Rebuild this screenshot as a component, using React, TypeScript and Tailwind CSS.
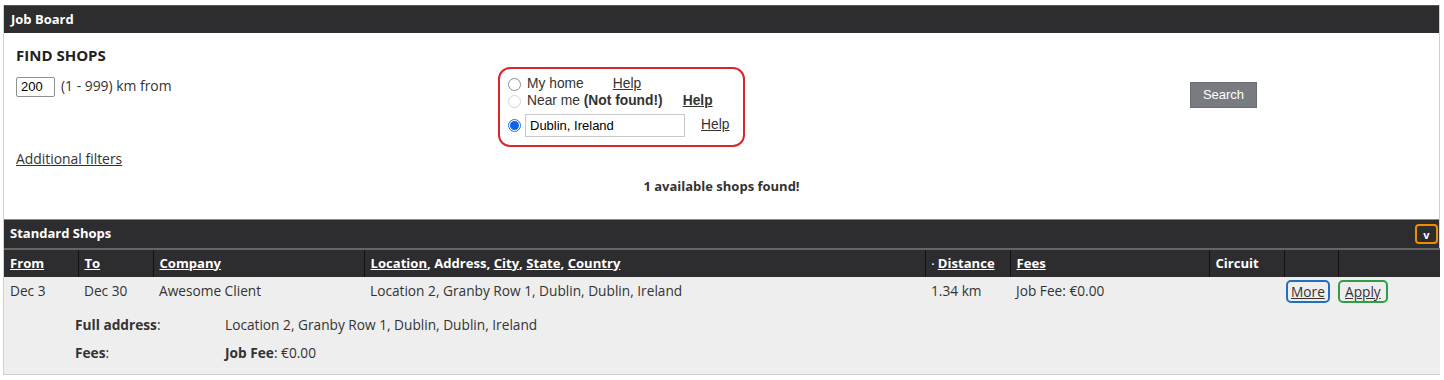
import React from "react";

const F = { fontFamily: '"Open Sans", "DejaVu Sans", sans-serif' };
const A = { fontFamily: '"Liberation Sans", Arial, sans-serif' };

function Radio({ checked, faded }: { checked?: boolean; faded?: boolean }) {
  return (
    <span
      className={
        "inline-block w-[13px] h-[13px] rounded-full border shrink-0 " +
        (checked
          ? "border-[#1a73e8] bg-white flex items-center justify-center"
          : faded
          ? "border-[#d4d4d4] bg-white"
          : "border-[#8d8d8d] bg-white")
      }
    >
      {checked && <span className="block w-[9px] h-[9px] rounded-full bg-[#0b63e6] mt-[1px] ml-[1px]" />}
    </span>
  );
}

export default function App() {
  const cols = [
    { w: 74, label: "From", u: true },
    { w: 75, label: "To", u: true },
    { w: 211, label: "Company", u: true },
    { w: 561, label: "loc" },
    { w: 85, label: "dist" },
    { w: 199, label: "Fees", u: true },
    { w: 75, label: "Circuit" },
    { w: 54, label: "" },
    { w: 102, label: "" },
  ];
  return (
    <div className="w-[1444px] h-[380px] bg-white pt-[5px] pl-[3px] text-[#333]" style={F}>
      <div className="w-[1437px] border-l border-r border-b border-[#cfcfcf]">
        <div className="h-[28px] bg-[#2d2d2f] border-t border-[#555] text-white font-bold text-[13px] flex items-center pl-[7px]">
          Job Board
        </div>
        <div className="relative h-[186px]">
          <div className="absolute left-[12px] top-[11px] text-[15px] font-bold text-[#222]">FIND SHOPS</div>
          <div className="absolute left-[12px] top-[44px] flex items-center gap-[6px]">
            <div className="w-[39px] h-[20px] border border-[#8f8f8f] rounded-[2px] text-[13px] text-black flex items-center pl-[4px]" style={A}>
              200
            </div>
            <span className="text-[13.9px] text-[#333] -mt-[2px]">(1 - 999) km from</span>
          </div>
          <div className="absolute left-[494px] top-[34px] w-[247px] h-[80px] border-2 border-[#d9272e] rounded-[12px]" style={A}>
            <div className="absolute left-[8px] top-[5px] flex items-center text-[13.8px] text-[#333]">
              <Radio />
              <span className="ml-[6px]">My home</span>
              <span className="ml-[29px] underline">Help</span>
            </div>
            <div className="absolute left-[8px] top-[22px] flex items-center text-[13.8px] text-[#333]">
              <Radio faded />
              <span className="ml-[6px]">Near me <b>(Not found!)</b></span>
              <span className="ml-[20px] underline font-bold">Help</span>
            </div>
            <div className="absolute left-[8px] top-[45px] flex items-center text-[13.8px] text-[#333]">
              <Radio checked />
              <div className="ml-[4px] w-[160px] h-[23px] border border-[#c9c9c9] text-black text-[13px] flex items-center pl-[4px]">Dublin, Ireland</div>
              <span className="ml-[16px] underline">Help</span>
            </div>
          </div>
          <div
            className="absolute left-[1186px] top-[49px] w-[67px] h-[26px] bg-[#787c81] border border-[#6a6e73] text-white text-[13px] flex items-center justify-center"
            style={A}
          >
            Search
          </div>
          <div className="absolute left-[12px] top-[116px] text-[13.9px] underline text-[#333]">Additional filters</div>
          <div className="absolute left-0 right-0 top-[144px] text-center text-[13px] font-bold text-[#333]">
            1 available shops found!
          </div>
        </div>
        <div className="h-[29px] bg-[#2d2d2f] border-t border-[#888] text-white font-bold text-[13px] flex items-center pl-[6px] relative">
          Standard Shops
          <div className="absolute right-[1px] top-[4px] w-[23px] h-[20px] border-2 border-[#f08c00] rounded-[4px] flex items-center justify-center text-[11px] text-white font-bold leading-none">
            v
          </div>
        </div>
        <table className="border-collapse table-fixed w-[1436px] text-[13.7px]">
          <colgroup>
            {cols.map((c, i) => (
              <col key={i} style={{ width: c.w }} />
            ))}
          </colgroup>
          <thead>
            <tr className="h-[28px] bg-[#2d2d2f] text-white font-bold border-t-2 border-[#666] text-[13.1px]">
              {cols.map((c, i) => (
                <th key={i} className={"text-left font-bold px-[6px] " + (i < cols.length - 1 ? "border-r border-[#111]" : "")}>
                  {c.label === "loc" ? (
                    <span>
                      <u>Location</u>, Address, <u>City</u>, <u>State</u>, <u>Country</u>
                    </span>
                  ) : c.label === "dist" ? (
                    <span>
                      <span className="text-[10px] align-middle">·</span> <u>Distance</u>
                    </span>
                  ) : c.u ? (
                    <u>{c.label}</u>
                  ) : (
                    c.label
                  )}
                </th>
              ))}
            </tr>
          </thead>
          <tbody className="bg-[#eeeeee] text-[#333]">
            <tr className="h-[28px]">
              <td className="px-[6px]">Dec 3</td>
              <td className="px-[6px]">Dec 30</td>
              <td className="px-[6px]">Awesome Client</td>
              <td className="px-[6px]">Location 2, Granby Row 1, Dublin, Dublin, Ireland</td>
              <td className="px-[6px]">1.34 km</td>
              <td className="px-[6px]">Job Fee: €0.00</td>
              <td className="px-[6px]"></td>
              <td className="px-[2px]">
                <span className="inline-block border-2 border-[#1f6fc5] rounded-[5px] px-[3px] leading-[19px] underline">More</span>
              </td>
              <td className="px-[0px]">
                <span className="inline-block border-2 border-[#2ea043] rounded-[5px] px-[5px] leading-[19px] underline">Apply</span>
              </td>
            </tr>
            <tr>
              <td colSpan={9} className="p-0">
                <div className="pl-[71px] pt-[6px] pb-[7px]">
                  <div className="flex h-[28px] items-center">
                    <span className="w-[150px] font-bold">Full address<span className="font-normal">:</span></span>
                    <span>Location 2, Granby Row 1, Dublin, Dublin, Ireland</span>
                  </div>
                  <div className="flex h-[28px] items-center">
                    <span className="w-[150px] font-bold">Fees<span className="font-normal">:</span></span>
                    <span>
                      <b>Job Fee</b>: €0.00
                    </span>
                  </div>
                </div>
              </td>
            </tr>
          </tbody>
        </table>
      </div>
    </div>
  );
}
